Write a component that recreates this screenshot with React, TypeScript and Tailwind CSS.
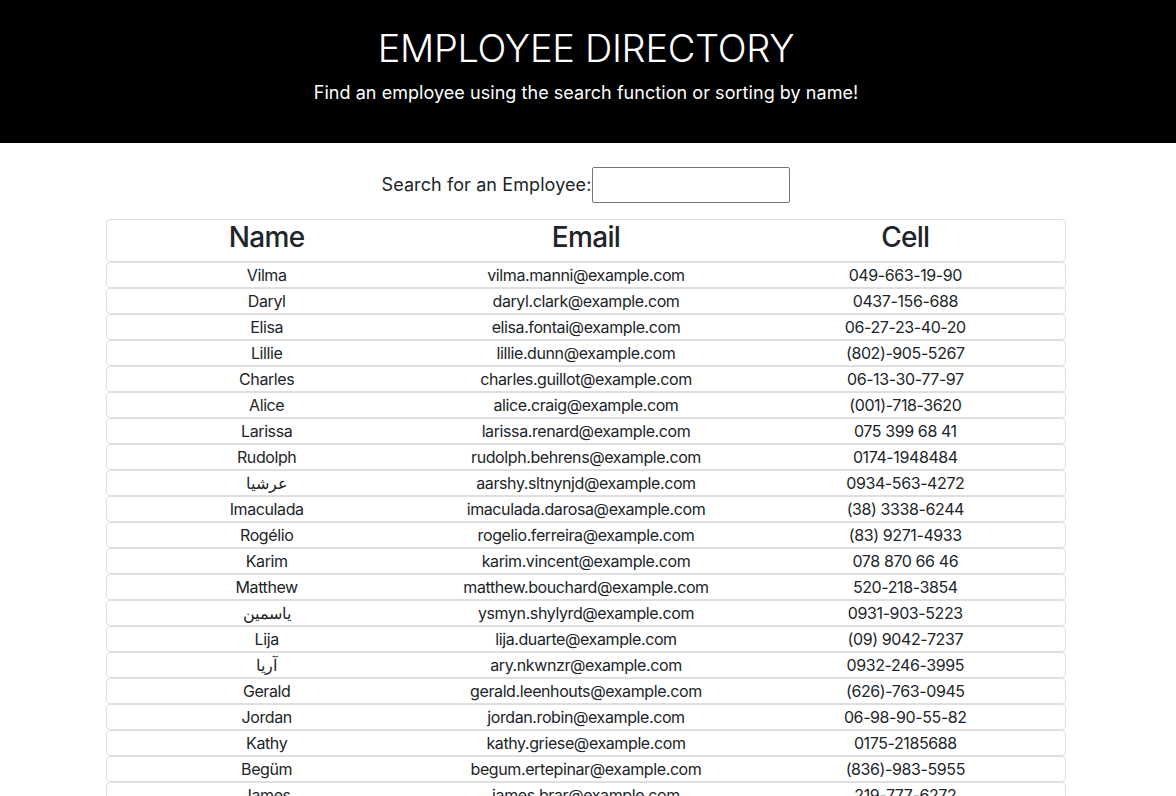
import React from "react";

const rows: [string, string, string][] = [
  ["Vilma", "vilma.manni@example.com", "049-663-19-90"],
  ["Daryl", "daryl.clark@example.com", "0437-156-688"],
  ["Elisa", "elisa.fontai@example.com", "06-27-23-40-20"],
  ["Lillie", "lillie.dunn@example.com", "(802)-905-5267"],
  ["Charles", "charles.guillot@example.com", "06-13-30-77-97"],
  ["Alice", "alice.craig@example.com", "(001)-718-3620"],
  ["Larissa", "larissa.renard@example.com", "075 399 68 41"],
  ["Rudolph", "rudolph.behrens@example.com", "0174-1948484"],
  ["عرشيا", "aarshy.sltnynjd@example.com", "0934-563-4272"],
  ["Imaculada", "imaculada.darosa@example.com", "(38) 3338-6244"],
  ["Rogélio", "rogelio.ferreira@example.com", "(83) 9271-4933"],
  ["Karim", "karim.vincent@example.com", "078 870 66 46"],
  ["Matthew", "matthew.bouchard@example.com", "520-218-3854"],
  ["ياسمين", "ysmyn.shylyrd@example.com", "0931-903-5223"],
  ["Lija", "lija.duarte@example.com", "(09) 9042-7237"],
  ["آریا", "ary.nkwnzr@example.com", "0932-246-3995"],
  ["Gerald", "gerald.leenhouts@example.com", "(626)-763-0945"],
  ["Jordan", "jordan.robin@example.com", "06-98-90-55-82"],
  ["Kathy", "kathy.griese@example.com", "0175-2185688"],
  ["Begüm", "begum.ertepinar@example.com", "(836)-983-5955"],
  ["James", "james.brar@example.com", "219-777-6272"],
];

export default function App() {
  return (
    <div
      className="h-[796px] overflow-hidden bg-white text-[#212529]"
      style={{ fontFamily: "Inter, 'Noto Sans', sans-serif" }}
    >
      <header className="bg-black text-white h-[143px] flex flex-col items-center pt-[27px]">
        <h1 className="text-[38px] leading-[42px] font-light tracking-[-0.3px] mr-[4px]">EMPLOYEE DIRECTORY</h1>
        <p className="text-[18px] leading-[26px] mt-[11px] tracking-[0.05px] mr-[4px]">
          Find an employee using the search function or sorting by name!
        </p>
      </header>
      <div className="flex justify-center items-center mt-[24px] h-[36px] pr-[5px]">
        <label className="text-[18px] leading-[24px] tracking-[0.1px]">Search for an Employee:</label>
        <input
          type="text"
          className="w-[198px] h-[36px] border border-[#767676] rounded-[2px] outline-none"
        />
      </div>
      <div className="w-[960px] ml-[106px] mt-[16px]">
        <div className="grid grid-cols-3 border border-[#dfdfdf] rounded-[4px] h-[43px] tracking-[-0.7px]">
          <div className="text-center text-[28px] leading-[34px] font-medium">Name</div>
          <div className="text-center text-[28px] leading-[34px] font-medium">Email</div>
          <div className="text-center text-[28px] leading-[34px] font-medium">Cell</div>
        </div>
        {rows.map((r, i) => (
          <div
            key={i}
            className="grid grid-cols-3 border border-[#dfdfdf] rounded-[4px] h-[26px] text-[16px] leading-[24px] tracking-[-0.4px]"
          >
            <div className="text-center">{r[0]}</div>
            <div className="text-center">{r[1]}</div>
            <div className="text-center">{r[2]}</div>
          </div>
        ))}
      </div>
    </div>
  );
}
